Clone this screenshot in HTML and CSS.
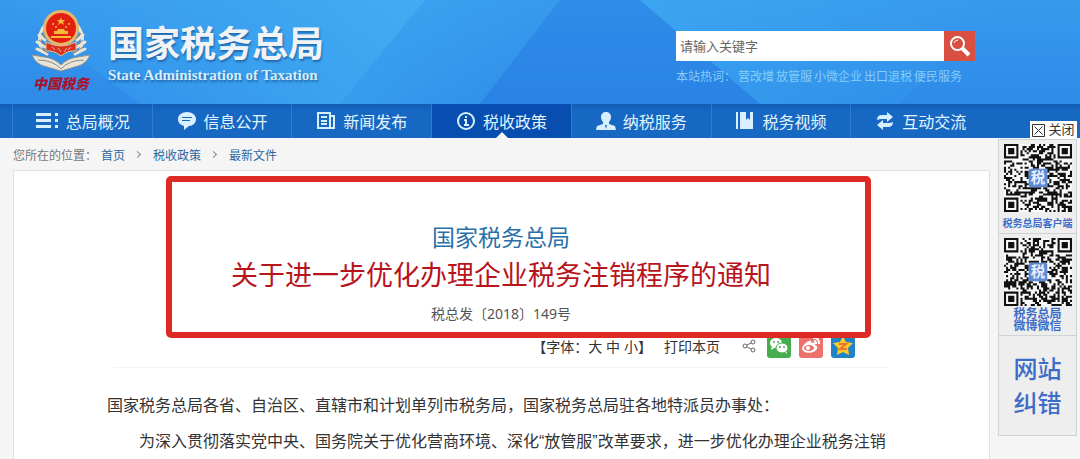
FILE: index.html
```
<!DOCTYPE html>
<html lang="zh-CN">
<head>
  <meta charset="utf-8">
  <title>国家税务总局</title>
  <link rel="stylesheet" href="styles.css">
</head>
<body>
  <header class="header">
    <svg class="header-bg" viewBox="0 0 1080 104" preserveAspectRatio="none" aria-hidden="true">
      <defs>
        <linearGradient id="glow" x1="0" y1="0" x2="1" y2="0">
          <stop offset="0" stop-color="#45b4f5" stop-opacity="0"/>
          <stop offset="1" stop-color="#45b4f5" stop-opacity=".7"/>
        </linearGradient>
        <linearGradient id="fade" x1="0" y1="0" x2="1" y2="0">
          <stop offset="0" stop-color="#3fb0f4" stop-opacity=".5"/>
          <stop offset="1" stop-color="#3fb0f4" stop-opacity="0"/>
        </linearGradient>
      </defs>
      <path fill="url(#glow)" d="M0 0H425L340 104H140z"/>
      <path fill="url(#fade)" d="M425 0H560L480 104H340z"/>
      <path fill="#2478e2" fill-opacity=".4" d="M560 0H640L760 104H480z"/>
      <path fill="url(#fade)" d="M640 0H1000L900 104H760z"/>
    </svg>
    <a class="logo" href="#">
      <span class="emblem">
        <svg width="60" height="66" viewBox="0 0 60 66" aria-hidden="true">
          <g fill="none" stroke="#e9e4d8" stroke-width="3" stroke-linecap="round">
            <path d="M14 17Q5 28 11 43M46 17Q55 28 49 43"/>
            <path d="M8 27l6 5M6 34l8 5M6 41l10 5M52 27l-6 5M54 34l-8 5M54 41l-10 5"/>
          </g>
          <g fill="none" stroke="#8f7966" stroke-width="1">
            <path d="M10 25l5 6M8 32l7 6M8 39l9 6M50 25l-5 6M52 32l-7 6M52 39l-9 6"/>
          </g>
          <path fill="#e9e4d8" stroke="#9b9488" d="M1 47l12 2q10 1 17 8q7-7 17-8l12-2q-4 9-12 11l-17 5-17-5Q5 56 1 47z"/>
          <path fill="none" stroke="#8c8b83" d="M7 52q15 0 23 9q8-9 23-9"/>
          <circle cx="30" cy="20" r="18" fill="#e8b66a"/>
          <circle cx="30" cy="20" r="15" fill="#e3200f"/>
          <path fill="#d9301f" stroke="#e8c087" d="M15 34q15 8 30 0v9q-8-1-15 5-7-6-15-5z"/>
          <path fill="#f6bb3d" d="M30 9l1 3h3l-2 2 1 3-3-2-3 2 1-3-2-2h3zM23 26h14v-3h-3l-1-2h-6l-1 2h-3zM20 28h20v2H20z"/>
          <g fill="#f6bb3d"><circle cx="22" cy="16" r="1"/><circle cx="25" cy="19" r="1"/><circle cx="35" cy="19" r="1"/><circle cx="38" cy="16" r="1"/></g>
          <path fill="none" stroke="#f0b18d" d="M21 39l3 3M27 40l3 4M33 44l3-4M37 42l3-3"/>
        </svg>
        <span class="emblem-text">中国税务</span>
      </span>
      <span class="logo-text">
        <span class="logo-cn">国家税务总局</span>
        <span class="logo-en">State Administration of Taxation</span>
      </span>
    </a>
    <div class="search-area">
      <form class="search">
        <input type="text" id="keyword" placeholder="请输入关键字" aria-label="请输入关键字">
        <button type="button" id="search-btn" aria-label="搜索">
          <svg width="22" height="22" viewBox="0 0 22 22" fill="none" stroke="#fff"><circle cx="8.500" cy="8.500" r="6.500" stroke-width="2"/><path d="M13 13l7 7" stroke-width="4"/><path d="M5 8q1-3 4-3"/></svg>
        </button>
      </form>
      <div class="hot">
        <span>本站热词：</span>
        <a href="#">营改增</a>
        <a href="#">放管服</a>
        <a href="#">小微企业</a>
        <a href="#">出口退税</a>
        <a href="#">便民服务</a>
      </div>
    </div>
  </header>

  <nav class="nav">
    <a href="#"><svg width="24" height="20" viewBox="0 0 24 20" fill="#d8efff"><path d="M1 2h15v3H1zM1 8h15v3H1zM1 14h15v3H1zM20 2h3v3h-3zM20 8h3v3h-3zM20 14h3v3h-3z"/></svg>总局概况</a>
    <a href="#"><svg width="20" height="20" viewBox="0 0 20 20"><path fill="#d8efff" d="M10 1c5 0 9 3 9 7s-3 7-7 7l-5 4v-4c-3-1-6-3-6-7s4-7 9-7z"/><path stroke="#1766bd" d="M5 6.500h10M5 9.500h8"/></svg>信息公开</a>
    <a href="#"><svg width="20" height="20" viewBox="0 0 20 20" fill="none" stroke="#d8efff" stroke-width="2"><path d="M2 2h12v15H2zM14 5h4v12h-4M5 6h6M5 10h6M5 13h6"/></svg>新闻发布</a>
    <a href="#" class="active"><svg width="20" height="20" viewBox="0 0 20 20" fill="none" stroke="#d8efff" stroke-width="2"><circle cx="10" cy="10" r="8"/><path d="M10 5v2M8 9h2v5M8 14h5"/></svg>税收政策</a>
    <a href="#"><svg width="20" height="20" viewBox="0 0 20 20" fill="#d8efff"><path d="M10 1c3 0 5 2 5 5 0 2-1 4-2 5v2l6 2 1 4H0l1-4 6-2v-2c-1-1-2-3-2-5 0-3 2-5 5-5z"/><path fill="#1766bd" d="M9 14h2l-1 4z"/></svg>纳税服务</a>
    <a href="#"><svg width="20" height="20" viewBox="0 0 20 20" fill="#d8efff"><path d="M1 1h2v17H1zM5 1h6v8l2-2 2 2V1h3v17H5z"/></svg>税务视频</a>
    <a href="#"><svg width="20" height="20" viewBox="0 0 20 20" fill="#d8efff"><path d="M2 9q0-5 5-5h5V1l6 5-6 5V8H7q-3 0-5 1zM18 11q0 5-5 5H8v3l-6-5 6-5v3h5q3 0 5-1z"/></svg>互动交流</a>
  </nav>

  <div class="breadcrumb">
    <span>您所在的位置：</span>
    <a href="#">首页</a><i></i><a href="#">税收政策</a><i></i><a href="#">最新文件</a>
  </div>

  <main class="article">
    <div class="mark"></div>
    <h2 class="source">国家税务总局</h2>
    <h1 class="title">关于进一步优化办理企业税务注销程序的通知</h1>
    <p class="doc-no">税总发〔2018〕149号</p>
    <div class="tools">
      <span class="font-size">【字体：<a href="#">大</a> <a href="#">中</a> <a href="#">小</a>】</span>
      <a href="#">打印本页</a>
      <div class="share">
        <svg width="14" height="14" viewBox="0 0 14 14" fill="none" stroke="#666"><circle cx="3" cy="7" r="2"/><circle cx="11" cy="3" r="2"/><circle cx="11" cy="11" r="2"/><path d="M5 6l4-2M5 8l4 2"/></svg>
        <a href="#" aria-label="微信"><svg width="24" height="24" viewBox="0 0 24 24"><rect width="24" height="24" rx="3" fill="#45ad4e"/><g fill="#fff"><ellipse cx="9" cy="9" rx="6" ry="5"/><path d="M5 12l-1 4 5-3zM17 17l3 3-1-5z"/><ellipse cx="15" cy="14" rx="6" ry="5" stroke="#45ad4e"/></g><g fill="#45ad4e"><circle cx="7" cy="8" r="1"/><circle cx="11" cy="8" r="1"/><circle cx="13" cy="13" r="1"/><circle cx="17" cy="13" r="1"/></g></svg></a>
        <a href="#" aria-label="微博"><svg width="24" height="24" viewBox="0 0 24 24"><rect width="24" height="24" rx="3" fill="#ec726b"/><path fill="#fff" d="M10 7c2-1 3 0 2 2 3-1 5 0 4 2 3 1 3 4 0 6-4 3-12 2-13-2 0-3 4-7 7-8z"/><ellipse cx="10" cy="14" rx="5" ry="3" fill="#ec726b"/><circle cx="9" cy="14" r="2" fill="#fff"/><path fill="none" stroke="#fff" stroke-width="2" d="M14 4q6-1 6 6M15 7q2 0 2 3"/></svg></a>
        <a href="#" aria-label="QQ空间"><svg width="24" height="24" viewBox="0 0 24 24"><rect width="24" height="24" rx="3" fill="#2182c5"/><path fill="#fcc82d" d="M12 2l3 6 7 1-5 5 1 7-6-3-6 3 1-7-5-5 7-1z"/><path fill="none" stroke="#e8752a" stroke-width="2" d="M8 10h7l-6 5h7"/></svg></a>
      </div>
    </div>
    <div class="content">
      <p>国家税务总局各省、自治区、直辖市和计划单列市税务局，国家税务总局驻各地特派员办事处：</p>
      <p class="indent">为深入贯彻落实党中央、国务院关于优化营商环境、深化“放管服”改革要求，进一步优化办理企业税务注销</p>
    </div>
  </main>

  <aside class="side">
    <button type="button" class="close"><svg width="13" height="13" viewBox="0 0 13 13" fill="none" stroke="#333"><path d="M.5.5h12v12H.5zM2.500 2.500l8 8M10.500 2.500l-8 8"/></svg>关闭</button>
    <div class="side-box">
      <div class="qr-item">
        <svg class="qr" data-seed="7" viewBox="0 0 33 33"></svg>
        <span>税务总局客户端</span>
      </div>
      <div class="qr-item">
        <svg class="qr" data-seed="23" viewBox="0 0 33 33"></svg>
        <span>税务总局<br>微博微信</span>
      </div>
      <a class="report" href="#">网站<br>纠错</a>
    </div>
  </aside>
  <script src="script.js"></script>
</body>
</html>
```
FILE: styles.css
```
body {
  margin: 0;
  background: #f5f5f6;
  color: #333;
  font-size: 12px;
  font-family: "Liberation Sans", "Noto Sans CJK SC", sans-serif;
  position: relative;
  overflow: hidden;
}

a {
  color: inherit;
  text-decoration: none;
}

.header {
  position: relative;
  display: flex;
  justify-content: space-between;
  height: 104px;
  box-sizing: border-box;
  padding: 0 105px 0 30px;
  background: linear-gradient(#379aed, #2e8be9);
}

.header-bg {
  position: absolute;
  top: 0;
  left: 0;
  width: 100%;
  height: 100%;
}

.logo {
  position: relative;
  display: flex;
  gap: 16px;
  color: #fff;
}

.emblem {
  display: flex;
  flex-direction: column;
  align-items: center;
  width: 62px;
  padding-top: 8px;
}

.emblem-text {
  color: #a81430;
  font-size: 14px;
  line-height: 20px;
  font-style: italic;
  font-weight: 900;
}

.logo-text {
  display: flex;
  flex-direction: column;
  padding-top: 25px;
  text-shadow: 1px 2px 2px rgba(20, 70, 130, 0.6);
}

.logo-cn {
  font-size: 36px;
  line-height: 40px;
  font-weight: bold;
  color: #f0f3f6;
}

.logo-en {
  font-family: "Liberation Serif", serif;
  font-size: 15px;
  line-height: 20px;
  font-weight: bold;
  color: #d5ecfc;
}

.search-area {
  position: relative;
  width: 299px;
  padding-top: 31px;
}

.search {
  display: flex;
  height: 30px;
}

#keyword {
  flex: 1;
  min-width: 0;
  box-sizing: border-box;
  border: none;
  padding: 0 4px;
  font-family: inherit;
  font-size: 13px;
}

#keyword::placeholder {
  color: #666;
}

#search-btn {
  display: flex;
  align-items: center;
  justify-content: center;
  width: 31px;
  padding: 0;
  border: none;
  background: #d94f42;
}

.hot {
  display: flex;
  gap: 2px;
  line-height: 20px;
  padding-top: 6px;
  color: #86cdfa;
  white-space: nowrap;
}

.nav {
  display: flex;
  height: 34px;
  padding: 0 90px 0 12px;
  background: linear-gradient(#125cb3, #1668c2 20%, #1668c2);
}

.nav a {
  position: relative;
  flex: 1;
  display: flex;
  align-items: center;
  justify-content: center;
  gap: 7px;
  box-sizing: border-box;
  border-left: 1px solid #2d7bcd;
  color: #e2f5ff;
  font-size: 16px;
}

.nav a.active {
  background: #084eb0;
}

.nav a.active::after {
  content: "";
  position: absolute;
  bottom: 0;
  left: 50%;
  margin-left: -6px;
  border: 6px solid transparent;
  border-top: none;
  border-bottom-color: #f5f5f6;
}

.breadcrumb {
  display: flex;
  align-items: center;
  height: 32px;
  padding-left: 13px;
  color: #777;
}

.breadcrumb a {
  color: #2a67a0;
}

.breadcrumb span {
  width: 88px;
}

.breadcrumb i {
  width: 4px;
  height: 4px;
  margin: 0 13px 0 10px;
  border: solid #888;
  border-width: 1px 1px 0 0;
  transform: rotate(45deg);
}

.article {
  position: relative;
  margin: 0 90px 0 13px;
  padding: 48px 94px 0 93px;
  background: #fff;
  border: 1px solid #dde3e7;
  border-bottom: none;
}

/* red frame round the heading */
.mark {
  position: absolute;
  top: 5px;
  left: 152px;
  right: 118px;
  height: 150px;
  border: 6px solid #dd2a25;
  border-radius: 5px;
}

.source,
.title,
.doc-no {
  margin: 0;
  line-height: 38px;
  font-weight: normal;
  text-align: center;
}

.source {
  color: #2a70a8;
  font-size: 23px;
}

.title {
  color: #b8141c;
  font-size: 27px;
}

.doc-no {
  color: #555;
  font-family: "Noto Sans", "Noto Sans CJK SC", sans-serif;
  font-size: 14px;
}

.tools {
  display: flex;
  align-items: center;
  justify-content: flex-end;
  gap: 12px;
  height: 26px;
  margin: 0 6px;
  padding: 0 34px 8px 0;
  border-bottom: 1px solid #f3f3f3;
  font-size: 14px;
}

.share {
  display: flex;
  align-items: center;
  gap: 8px;
  padding-left: 10px;
}

.share a,
.share svg {
  display: block;
}

.share > svg {
  margin-right: 3px;
}

.content {
  padding-top: 20px;
  font-size: 16px;
  line-height: 36px;
}

.content p {
  margin: 0;
}

.content .indent {
  text-indent: 2em;
}

.side {
  position: absolute;
  top: 121px;
  right: 3px;
  width: 79px;
  display: flex;
  flex-direction: column;
  align-items: flex-end;
}

.close {
  display: flex;
  align-items: center;
  justify-content: center;
  gap: 3px;
  width: 47px;
  height: 18px;
  padding: 0;
  border: none;
  background: #fff;
  color: #333;
  font-family: inherit;
  font-size: 13px;
  line-height: 18px;
}

.side-box {
  width: 100%;
  box-sizing: border-box;
  border: 1px solid #cfd2d6;
  background: #eee;
  color: #3d6cc8;
  text-align: center;
}

.qr-item {
  padding-top: 4px;
  border-bottom: 1px solid #cfd2d6;
  font-size: 10px;
  line-height: 12px;
  font-weight: bold;
}

.qr-item + .qr-item {
  font-size: 12px;
}

.qr {
  display: block;
  width: 68px;
  height: 68px;
  margin: 0 auto 6px;
}

.qr-item + .qr-item .qr {
  margin-bottom: 2px;
}

.qr-item span {
  display: block;
  padding-bottom: 3px;
}

.report {
  display: block;
  padding: 17px 0 14px;
  font-size: 24px;
  line-height: 34px;
  font-weight: 500;
}
```
FILE: script.js
```
(function() {
    'use strict';

    const SIZE = 33;

    // finder pattern in three corners
    function finder(x, y) {
        return '<path fill="#111" fill-rule="evenodd" d="M' + x + ' ' + y +
            'h7v7h-7zm1 1v5h5v-5zm1 1h3v3h-3z"/>';
    }

    function isFree(x, y) {
        if (x < 8 && y < 8 || x > 24 && y < 8 || x < 8 && y > 24) {
            return false;
        }
        return !(x > 11 && x < 21 && y > 11 && y < 21);
    }

    function drawQr(svg) {
        let seed = Number(svg.dataset.seed);
        let d = '';
        for (let y = 0; y < SIZE; y++) {
            for (let x = 0; x < SIZE; x++) {
                seed = (seed * 16807) % 2147483647;
                if (isFree(x, y) && seed / 2147483647 < 0.52) {
                    d += 'M' + x + ' ' + y + 'h1v1h-1z';
                }
            }
        }
        svg.innerHTML = '<rect width="33" height="33" fill="#f8f8f8"/>' +
            '<path fill="#111" d="' + d + '"/>' +
            finder(0, 0) + finder(26, 0) + finder(0, 26) +
            '<rect x="12" y="12" width="9" height="9" rx="1" fill="#5b8bd6"/>' +
            '<text x="13" y="19" font-size="7" fill="#e6effc">税</text>';
    }

    document.querySelectorAll('.qr').forEach(drawQr);
})();
```
